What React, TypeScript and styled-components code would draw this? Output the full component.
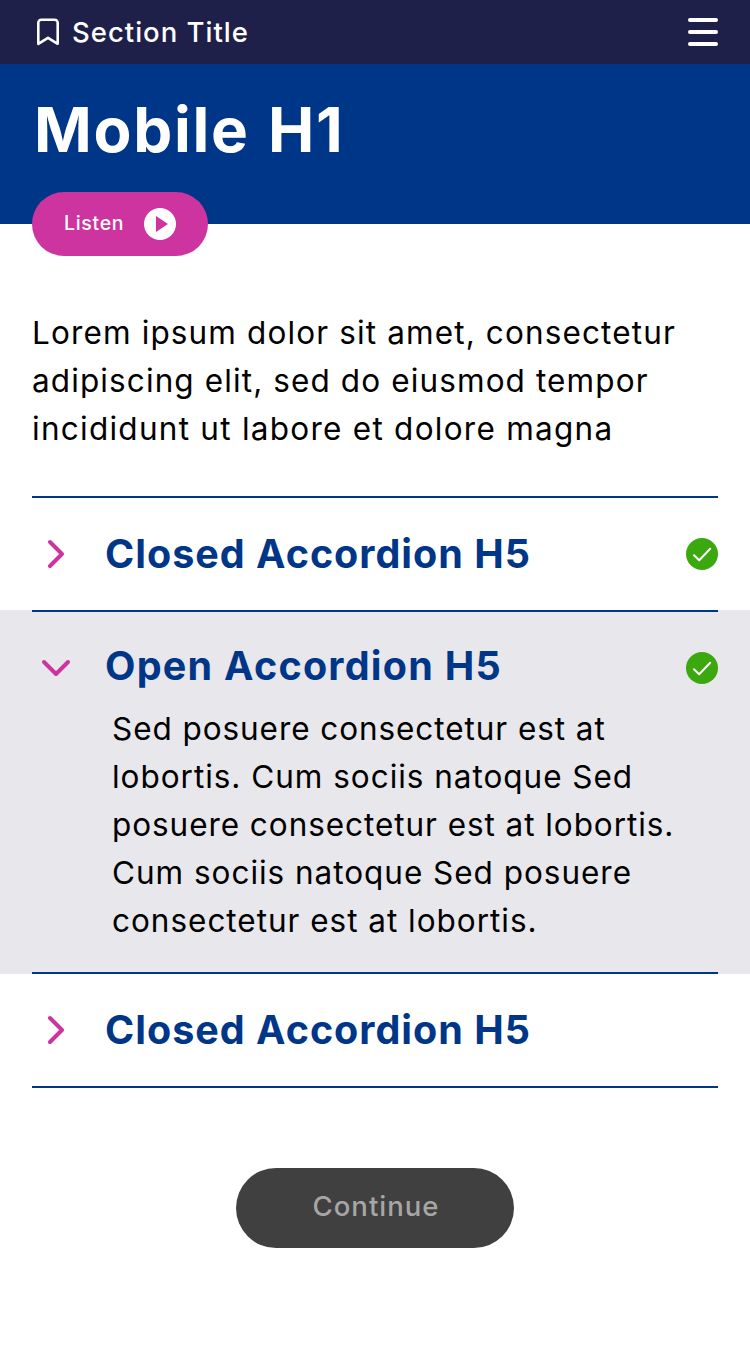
import React from "react";
import styled, { createGlobalStyle } from "styled-components";

const blue = "#003688";
const pink = "#cd349f";

const GlobalStyle = createGlobalStyle`
  *, *::before, *::after { box-sizing: border-box; }
  body {
    margin: 0;
    background: #fff;
    color: #000;
    font-family: Inter, "Liberation Sans", sans-serif;
  }
`;

const Page = styled.div`
  width: 750px;
  min-height: 1350px;
  background: #fff;
  display: flex;
  flex-direction: column;
`;

const TopBar = styled.header`
  height: 64px;
  padding: 0 32px;
  display: flex;
  align-items: center;
  justify-content: space-between;
  background: #1f204a;
  color: #fff;
`;

const Section = styled.div`
  display: flex;
  align-items: center;
  gap: 8px;
`;

const SectionTitle = styled.span`
  font-size: 27.5px;
  line-height: 40px;
  font-weight: 500;
  letter-spacing: 1px;
  white-space: nowrap;
`;

const MenuButton = styled.button`
  width: 30px;
  height: 28px;
  padding: 0;
  border: 0;
  background: none;
  display: flex;
  flex-direction: column;
  justify-content: space-between;
`;

const MenuLine = styled.span`
  height: 4px;
  border-radius: 2px;
  background: #fff;
`;

const Hero = styled.div`
  height: 160px;
  padding: 26px 32px 0;
  background: ${blue};
  color: #fff;
`;

const Title = styled.h1`
  margin: 0;
  padding-left: 2px;
  font-size: 62px;
  line-height: 80px;
  height: 102px;
  font-weight: 700;
  letter-spacing: 1.7px;
  word-spacing: 2px;
  white-space: nowrap;
`;

const ListenButton = styled.button`
  width: 176px;
  height: 64px;
  padding: 0 32px;
  border: 0;
  border-radius: 32px;
  display: flex;
  align-items: center;
  justify-content: space-between;
  background: ${pink};
  color: #fff;
  font: 500 19.5px/24px Inter, "Liberation Sans", sans-serif;
  letter-spacing: 0.7px;
`;

const ListenLabel = styled.span`
  padding-bottom: 2px;
`;

const Copy = styled.p<{ $spacing: number }>`
  margin: 0;
  font-size: 31.5px;
  line-height: 48px;
  font-weight: 400;
  letter-spacing: ${(p) => p.$spacing}px;
  white-space: nowrap;
`;

const Intro = styled.section`
  padding: 85px 32px 0;
  height: 272px;
`;

const Divider = styled.hr`
  margin: 0 32px;
  height: 2px;
  border: 0;
  background: ${blue};
`;

const Item = styled.section<{ $open?: boolean }>`
  background: ${(p) => (p.$open ? "#e8e7ec" : "#fff")};
`;

const ItemHeader = styled.div<{ $open?: boolean }>`
  height: ${(p) => (p.$open ? 93 : 112)}px;
  padding: ${(p) => (p.$open ? 40 : 0)}px 32px 0;
  display: grid;
  grid-template-columns: 73px 1fr 32px;
  align-items: ${(p) => (p.$open ? "start" : "center")};
`;

const ItemTitle = styled.h5<{ $open?: boolean }>`
  margin: ${(p) => (p.$open ? "-10px" : "0")} 0 0;
  color: ${blue};
  font-size: 39.5px;
  line-height: 48px;
  font-weight: 700;
  letter-spacing: ${(p) => (p.$open ? 1.25 : 1)}px;
  white-space: nowrap;
`;

const ItemBody = styled.div`
  height: 267px;
  padding: 0 32px 0 112px;
`;

const Actions = styled.div`
  display: flex;
  justify-content: center;
  padding-top: 80px;
`;

const ContinueButton = styled.button`
  width: 278px;
  height: 80px;
  padding: 0 0 4px 2px;
  border: 0;
  border-radius: 40px;
  background: #404040;
  color: #a6a6a6;
  font: 500 27.5px/40px Inter, "Liberation Sans", sans-serif;
  letter-spacing: 1px;
`;

const Bookmark = () => (
  <svg width="32" height="32" viewBox="0 0 32 32" fill="none" stroke="#fff" strokeWidth="2.6" strokeLinejoin="round">
    <path d="M6.3 27.8V6.8a3 3 0 0 1 3-3h13.4a3 3 0 0 1 3 3v21L16 21.8z" />
  </svg>
);

const Play = () => (
  <svg width="32" height="32" viewBox="0 0 32 32">
    <circle cx="16" cy="16" r="16" fill="#fff" />
    <path d="M12 8l12 8-12 8z" fill={pink} />
  </svg>
);

const Chevron = ({ open }: { open?: boolean }) => (
  <svg width="48" height="32" viewBox="0 0 48 32" fill="none" stroke={pink} strokeWidth="4" strokeLinecap="round" strokeLinejoin="round">
    <path d={open ? "M12 10l12 12 12-12" : "M18 4l12 12-12 12"} />
  </svg>
);

const Check = () => (
  <svg width="32" height="32" viewBox="0 0 32 32" fill="none">
    <circle cx="16" cy="16" r="16" fill="#3aa80e" />
    <path d="M8 17.2l5.2 5L24.2 10.8" stroke="#fff" strokeWidth="2" strokeLinecap="round" strokeLinejoin="round" />
  </svg>
);

interface Line {
  text: string;
  spacing: number;
}

const intro: Line[] = [
  { text: "Lorem ipsum dolor sit amet, consectetur", spacing: 1.13 },
  { text: "adipiscing elit, sed do eiusmod tempor", spacing: 1.11 },
  { text: "incididunt ut labore et dolore magna", spacing: 1.26 },
];

const details: Line[] = [
  { text: "Sed posuere consectetur est at", spacing: 0.93 },
  { text: "lobortis. Cum sociis natoque Sed", spacing: 0.97 },
  { text: "posuere consectetur est at lobortis.", spacing: 0.94 },
  { text: "Cum sociis natoque Sed posuere", spacing: 0.97 },
  { text: "consectetur est at lobortis.", spacing: 0.98 },
];

const Lines = ({ lines }: { lines: Line[] }) => (
  <>
    {lines.map((l) => (
      <Copy key={l.text} $spacing={l.spacing}>
        {l.text}
      </Copy>
    ))}
  </>
);

export default function App() {
  return (
    <Page>
      <GlobalStyle />
      <TopBar>
        <Section>
          <Bookmark />
          <SectionTitle>Section Title</SectionTitle>
        </Section>
        <MenuButton aria-label="Menu">
          <MenuLine />
          <MenuLine />
          <MenuLine />
        </MenuButton>
      </TopBar>
      <Hero>
        <Title>Mobile H1</Title>
        <ListenButton>
          <ListenLabel>Listen</ListenLabel>
          <Play />
        </ListenButton>
      </Hero>
      <Intro>
        <Lines lines={intro} />
      </Intro>
      <Item>
        <Divider />
        <ItemHeader>
          <Chevron />
          <ItemTitle>Closed Accordion H5</ItemTitle>
          <Check />
        </ItemHeader>
      </Item>
      <Item $open>
        <Divider />
        <ItemHeader $open>
          <Chevron open />
          <ItemTitle $open>Open Accordion H5</ItemTitle>
          <Check />
        </ItemHeader>
        <ItemBody>
          <Lines lines={details} />
        </ItemBody>
        <Divider />
      </Item>
      <Item>
        <ItemHeader>
          <Chevron />
          <ItemTitle>Closed Accordion H5</ItemTitle>
        </ItemHeader>
        <Divider />
      </Item>
      <Actions>
        <ContinueButton>Continue</ContinueButton>
      </Actions>
    </Page>
  );
}
